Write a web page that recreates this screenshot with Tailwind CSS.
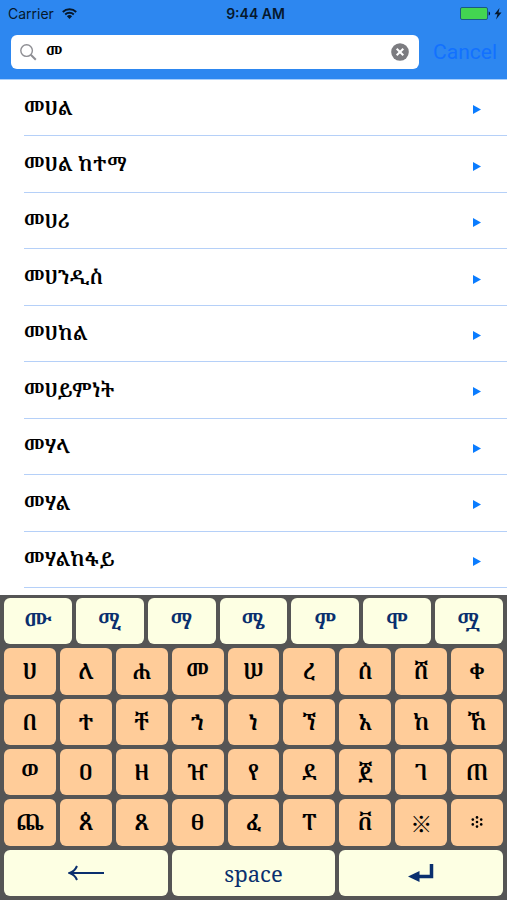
<!DOCTYPE html>
<html lang="am">
  <head>
    <meta charset="UTF-8" />
    <meta name="viewport" content="width=device-width, initial-scale=1.0" />
    <title>መዝገበ ቃላት</title>
    <script src="https://cdn.jsdelivr.net/npm/@tailwindcss/browser@4"></script>
  </head>
  <body class="flex min-h-screen flex-col bg-white font-['Inter','Noto_Serif_Ethiopic','Abyssinica_SIL','Noto_Sans_Ethiopic',sans-serif] text-black">
    <header class="border-b border-[#a9cffb] bg-[#2d87f0] pb-[10px]">
      <div class="grid h-[27px] grid-cols-3 items-center pr-1 pl-2 text-sm">
        <div class="flex items-center gap-2 text-[#06182c]">
          <span>Carrier</span>
          <svg class="h-[11px] w-[15px]" viewBox="0 0 15 11" fill="none" stroke="#06182c" stroke-width="1.9">
            <path d="M.8 4a9.6 9.6 0 0 1 13.4 0M3.2 6.5a6.2 6.2 0 0 1 8.6 0" />
            <path d="M7.5 11 4.9 8.3a3.8 3.8 0 0 1 5.2 0z" fill="#06182c" stroke="none" />
          </svg>
        </div>
        <time class="text-center font-semibold text-[#06182c]">9:44 AM</time>
        <div class="flex items-center justify-end">
          <svg class="h-[13px] w-[43px]" viewBox="0 0 43 13">
            <rect x=".5" y=".5" width="27" height="12" rx="1.5" fill="#43d551" stroke="#1b5a83" />
            <path d="M28.7 4.5c1.8.4 1.8 3.6 0 4z" fill="#06182c" />
            <path d="M39.500 1 34.500 7.200h3L36 12.500l5.500-7h-3z" fill="#06182c" />
          </svg>
        </div>
      </div>
      <form id="searchForm" class="flex items-center pt-2 pr-[10px] pl-[11px]">
        <div class="flex h-[34px] flex-1 items-center rounded-md bg-white pr-[10px] pl-[9px]">
          <svg class="h-[17px] w-[17px] shrink-0" viewBox="0 0 17 17" fill="none" stroke="#8e8e93">
            <circle cx="6.6" cy="6.6" r="5.8" stroke-width="1.4" />
            <path d="m10.8 10.8 5 5" stroke-width="2" />
          </svg>
          <input
            id="search"
            type="text"
            aria-label="Search"
            value="መ"
            class="ml-[9px] min-w-0 flex-1 bg-transparent text-base font-semibold outline-none" />
          <button type="button" id="clear" aria-label="Clear">
            <svg class="h-[18px] w-[18px]" viewBox="0 0 18 18">
              <circle cx="9" cy="9" r="8.8" fill="#7c7c80" />
              <path d="m5.7 5.7 6.6 6.6m0-6.6-6.6 6.6" stroke="#fff" stroke-width="2" />
            </svg>
          </button>
        </div>
        <button type="reset" class="ml-[14px] font-['Roboto',sans-serif] text-[21px] leading-7 text-[#1271ff]">Cancel</button>
      </form>
    </header>

    <ul id="words" class="flex flex-1 flex-col pb-[7px] text-xl font-semibold">
      <li class="ml-6 flex flex-1 border-b border-[#b5d0f8]"><a href="#" class="flex flex-1 items-center justify-between pr-[26px]">መሀል<svg class="mt-1 h-[9px] w-2" viewBox="0 0 8 9"><path d="M0 0 8 4.5 0 9z" fill="#0a7cff" /></svg></a></li>
      <li class="ml-6 flex flex-1 border-b border-[#b5d0f8]"><a href="#" class="flex flex-1 items-center justify-between pr-[26px]">መሀል ከተማ<svg class="mt-1 h-[9px] w-2" viewBox="0 0 8 9"><path d="M0 0 8 4.5 0 9z" fill="#0a7cff" /></svg></a></li>
      <li class="ml-6 flex flex-1 border-b border-[#b5d0f8]"><a href="#" class="flex flex-1 items-center justify-between pr-[26px]">መሀሪ<svg class="mt-1 h-[9px] w-2" viewBox="0 0 8 9"><path d="M0 0 8 4.5 0 9z" fill="#0a7cff" /></svg></a></li>
      <li class="ml-6 flex flex-1 border-b border-[#b5d0f8]"><a href="#" class="flex flex-1 items-center justify-between pr-[26px]">መሀንዲስ<svg class="mt-1 h-[9px] w-2" viewBox="0 0 8 9"><path d="M0 0 8 4.5 0 9z" fill="#0a7cff" /></svg></a></li>
      <li class="ml-6 flex flex-1 border-b border-[#b5d0f8]"><a href="#" class="flex flex-1 items-center justify-between pr-[26px]">መሀከል<svg class="mt-1 h-[9px] w-2" viewBox="0 0 8 9"><path d="M0 0 8 4.5 0 9z" fill="#0a7cff" /></svg></a></li>
      <li class="ml-6 flex flex-1 border-b border-[#b5d0f8]"><a href="#" class="flex flex-1 items-center justify-between pr-[26px]">መሀይምነት<svg class="mt-1 h-[9px] w-2" viewBox="0 0 8 9"><path d="M0 0 8 4.5 0 9z" fill="#0a7cff" /></svg></a></li>
      <li class="ml-6 flex flex-1 border-b border-[#b5d0f8]"><a href="#" class="flex flex-1 items-center justify-between pr-[26px]">መሃላ<svg class="mt-1 h-[9px] w-2" viewBox="0 0 8 9"><path d="M0 0 8 4.5 0 9z" fill="#0a7cff" /></svg></a></li>
      <li class="ml-6 flex flex-1 border-b border-[#b5d0f8]"><a href="#" class="flex flex-1 items-center justify-between pr-[26px]">መሃል<svg class="mt-1 h-[9px] w-2" viewBox="0 0 8 9"><path d="M0 0 8 4.5 0 9z" fill="#0a7cff" /></svg></a></li>
      <li class="ml-6 flex flex-1 border-b border-[#b5d0f8]"><a href="#" class="flex flex-1 items-center justify-between pr-[26px]">መሃልከፋይ<svg class="mt-1 h-[9px] w-2" viewBox="0 0 8 9"><path d="M0 0 8 4.5 0 9z" fill="#0a7cff" /></svg></a></li>
    </ul>

    <div id="keyboard" class="flex h-[305px] flex-col gap-1 bg-[#555] px-1 pt-[3px] pb-1 text-[22px] leading-7 font-semibold">
      <div class="grid flex-1 grid-cols-7 gap-1 text-[#0a2f6e]">
        <button type="button" class="rounded-md bg-[#fdffe3]">ሙ</button>
        <button type="button" class="rounded-md bg-[#fdffe3]">ሚ</button>
        <button type="button" class="rounded-md bg-[#fdffe3]">ማ</button>
        <button type="button" class="rounded-md bg-[#fdffe3]">ሜ</button>
        <button type="button" class="rounded-md bg-[#fdffe3]">ም</button>
        <button type="button" class="rounded-md bg-[#fdffe3]">ሞ</button>
        <button type="button" class="rounded-md bg-[#fdffe3]">ሟ</button>
      </div>
      <div class="grid flex-1 grid-cols-9 gap-1">
        <button type="button" class="rounded-md bg-[#ffcc99]">ሀ</button>
        <button type="button" class="rounded-md bg-[#ffcc99]">ለ</button>
        <button type="button" class="rounded-md bg-[#ffcc99]">ሐ</button>
        <button type="button" class="rounded-md bg-[#ffcc99]">መ</button>
        <button type="button" class="rounded-md bg-[#ffcc99]">ሠ</button>
        <button type="button" class="rounded-md bg-[#ffcc99]">ረ</button>
        <button type="button" class="rounded-md bg-[#ffcc99]">ሰ</button>
        <button type="button" class="rounded-md bg-[#ffcc99]">ሸ</button>
        <button type="button" class="rounded-md bg-[#ffcc99]">ቀ</button>
      </div>
      <div class="grid flex-1 grid-cols-9 gap-1">
        <button type="button" class="rounded-md bg-[#ffcc99]">በ</button>
        <button type="button" class="rounded-md bg-[#ffcc99]">ተ</button>
        <button type="button" class="rounded-md bg-[#ffcc99]">ቸ</button>
        <button type="button" class="rounded-md bg-[#ffcc99]">ኀ</button>
        <button type="button" class="rounded-md bg-[#ffcc99]">ነ</button>
        <button type="button" class="rounded-md bg-[#ffcc99]">ኘ</button>
        <button type="button" class="rounded-md bg-[#ffcc99]">አ</button>
        <button type="button" class="rounded-md bg-[#ffcc99]">ከ</button>
        <button type="button" class="rounded-md bg-[#ffcc99]">ኸ</button>
      </div>
      <div class="grid flex-1 grid-cols-9 gap-1">
        <button type="button" class="rounded-md bg-[#ffcc99]">ወ</button>
        <button type="button" class="rounded-md bg-[#ffcc99]">ዐ</button>
        <button type="button" class="rounded-md bg-[#ffcc99]">ዘ</button>
        <button type="button" class="rounded-md bg-[#ffcc99]">ዠ</button>
        <button type="button" class="rounded-md bg-[#ffcc99]">የ</button>
        <button type="button" class="rounded-md bg-[#ffcc99]">ደ</button>
        <button type="button" class="rounded-md bg-[#ffcc99]">ጀ</button>
        <button type="button" class="rounded-md bg-[#ffcc99]">ገ</button>
        <button type="button" class="rounded-md bg-[#ffcc99]">ጠ</button>
      </div>
      <div class="grid flex-1 grid-cols-9 gap-1">
        <button type="button" class="rounded-md bg-[#ffcc99]">ጨ</button>
        <button type="button" class="rounded-md bg-[#ffcc99]">ጰ</button>
        <button type="button" class="rounded-md bg-[#ffcc99]">ጸ</button>
        <button type="button" class="rounded-md bg-[#ffcc99]">ፀ</button>
        <button type="button" class="rounded-md bg-[#ffcc99]">ፈ</button>
        <button type="button" class="rounded-md bg-[#ffcc99]">ፐ</button>
        <button type="button" class="rounded-md bg-[#ffcc99]">ቨ</button>
        <button type="button" class="rounded-md bg-[#ffcc99] font-['Noto_Sans_CJK_JP',sans-serif] font-normal">※</button>
        <button type="button" class="rounded-md bg-[#ffcc99]" aria-label="Section mark">
          <svg class="mx-auto h-3 w-3" viewBox="0 0 12 12" fill="#000">
            <circle cx="6" cy="1.4" r="1.3" />
            <circle cx="6" cy="6" r="1.3" />
            <circle cx="6" cy="10.6" r="1.3" />
            <circle cx="1.8" cy="3.6" r="1.3" />
            <circle cx="10.2" cy="3.6" r="1.3" />
            <circle cx="1.8" cy="8.4" r="1.3" />
            <circle cx="10.2" cy="8.4" r="1.3" />
          </svg>
        </button>
      </div>
      <div class="grid flex-1 grid-cols-3 gap-1 text-[#0a2f6e]">
        <button type="button" class="rounded-md bg-[#fdffe3]" aria-label="Backspace">
          <svg class="mx-auto h-4 w-9" viewBox="0 0 36 16" fill="none" stroke="#0a2f6e" stroke-width="2">
            <path d="M2 8h34M9 1C7.500 4.500 5 7 1.500 8 5 9 7.500 11.500 9 15" />
          </svg>
        </button>
        <button type="button" class="rounded-md bg-[#fdffe3] font-['Noto_Serif','Liberation_Serif',serif] font-normal">space</button>
        <button type="button" class="rounded-md bg-[#fdffe3]" aria-label="Return">
          <svg class="mx-auto h-[18px] w-[26px]" viewBox="0 0 26 18">
            <path d="M10 12.500h13.500V0" fill="none" stroke="#0a2f6e" stroke-width="3.500" />
            <path d="M0 12.500 11.500 7v11z" fill="#0a2f6e" />
          </svg>
        </button>
      </div>
    </div>

    <script>
      const search = document.getElementById("search");

      document.getElementById("clear").addEventListener("click", () => {
        search.value = "";
        search.focus();
      });
    </script>
  </body>
</html>
